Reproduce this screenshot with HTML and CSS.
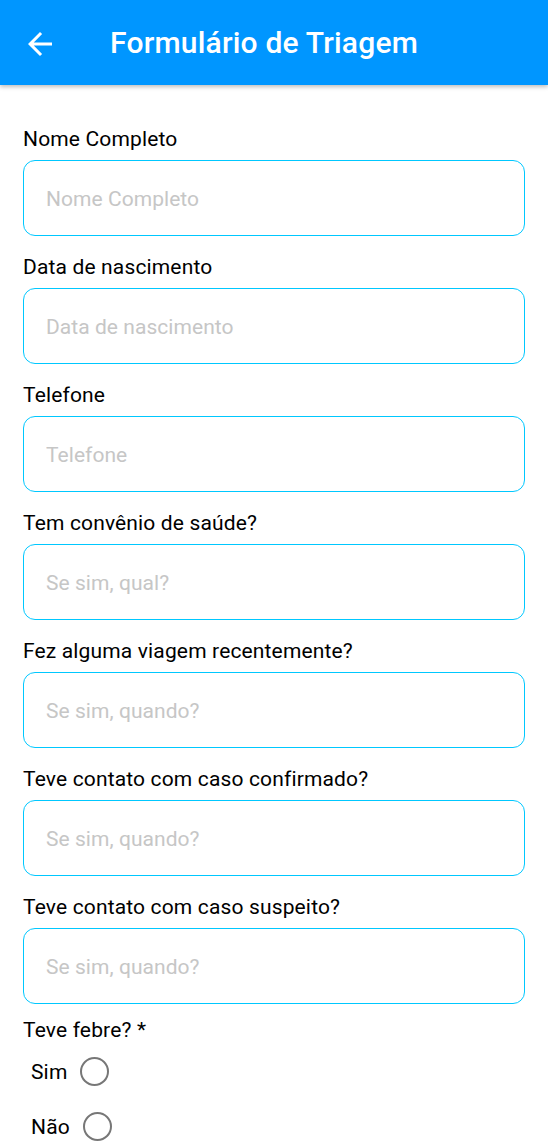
FILE: index.html
```html
<!DOCTYPE html>
<html lang="pt">
<head>
<meta charset="utf-8">
<title>Formulário de Triagem</title>
<link rel="stylesheet" href="styles.css">
</head>
<body>
<header class="appbar">
  <svg class="back" viewBox="0 0 24 24" width="36" height="36"><path fill="#fff" d="M20 11H7.83l5.59-5.59L12 4l-8 8 8 8 1.41-1.41L7.83 13H20v-2z"/></svg>
  <h1 class="title">Formulário de Triagem</h1>
</header>
<main class="form">
  <div class="field"><label class="label">Nome Completo</label><input class="input" placeholder="Nome Completo"></div>
  <div class="field"><label class="label">Data de nascimento</label><input class="input" placeholder="Data de nascimento"></div>
  <div class="field"><label class="label">Telefone</label><input class="input" placeholder="Telefone"></div>
  <div class="field"><label class="label">Tem convênio de saúde?</label><input class="input" placeholder="Se sim, qual?"></div>
  <div class="field"><label class="label">Fez alguma viagem recentemente?</label><input class="input" placeholder="Se sim, quando?"></div>
  <div class="field"><label class="label">Teve contato com caso confirmado?</label><input class="input" placeholder="Se sim, quando?"></div>
  <div class="field"><label class="label">Teve contato com caso suspeito?</label><input class="input" placeholder="Se sim, quando?"></div>
  <div class="group">
    <div class="label">Teve febre? *</div>
    <div class="radio-row"><span class="radio-text">Sim</span><span class="radio"></span></div>
    <div class="radio-row"><span class="radio-text">Não</span><span class="radio"></span></div>
  </div>
</main>
</body>
</html>
```
FILE: styles.css
```css
* { box-sizing: border-box; }
html, body { margin: 0; padding: 0; background: #fff; }
body { font-family: Roboto, "Noto Sans", sans-serif; color: #000; overflow: hidden; }
.appbar {
  height: 85px;
  background: #0096ff;
  display: flex;
  align-items: center;
  padding-left: 22px;
  box-shadow: 0 2px 4px rgba(0,0,0,0.25);
}
.back { display: block; margin-top: 2px; }
.title {
  margin: 0 0 0 52px;
  color: #fff;
  font-size: 30px;
  font-weight: 500;
  letter-spacing: 0.2px;
}
.form {
  padding: 42px 23px 0 23px;
  display: flex;
  flex-direction: column;
  gap: 19px;
}
.field { display: flex; flex-direction: column; gap: 9px; }
.label { font-size: 21px; line-height: 24px; letter-spacing: 0.15px; }
.input {
  height: 76px;
  width: 100%;
  border: 1.5px solid #00c8ff;
  border-radius: 12px;
  padding: 1px 22px 0 22px;
  font-family: Roboto, "Noto Sans", sans-serif;
  font-size: 21px;
  letter-spacing: 0.05px;
  outline: none;
  background: #fff;
}
.input::placeholder { color: #c6c6c6; }
.group { display: flex; flex-direction: column; margin-top: -5px; }
.radio-row { display: flex; align-items: center; height: 55px; padding-left: 8px; gap: 13px; }
.group .label + .radio-row { margin-top: 2px; }
.radio-text { font-size: 21px; letter-spacing: 0.15px; }
.radio {
  width: 29px; height: 29px;
  border: 2.5px solid #777;
  border-radius: 50%;
}
```
